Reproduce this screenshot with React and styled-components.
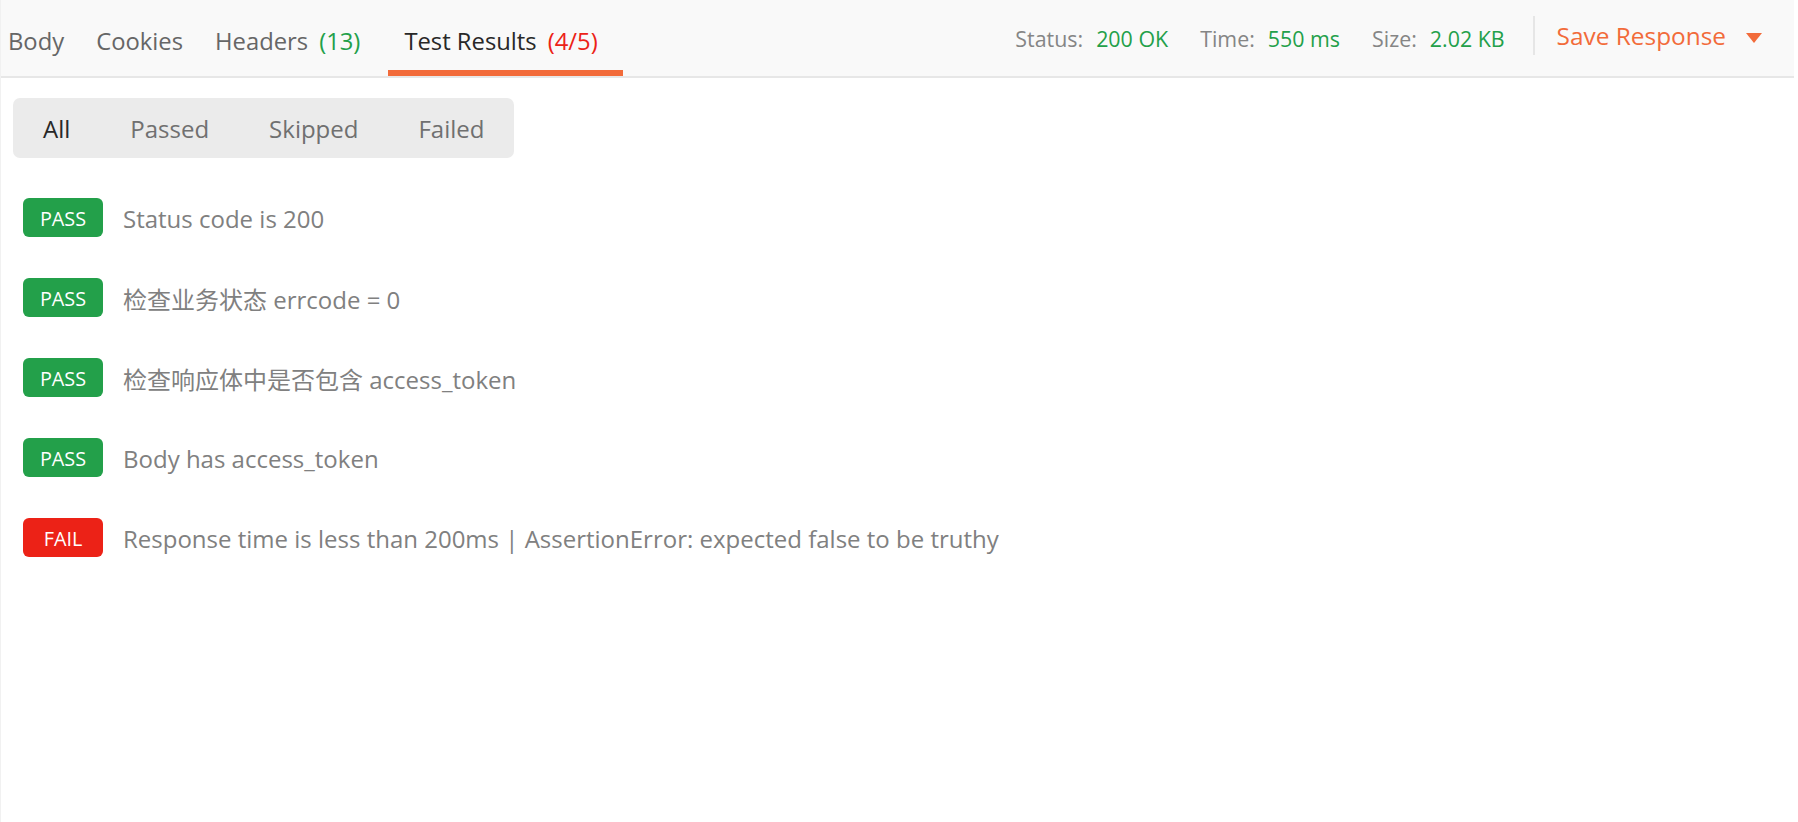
import React from 'react';
import styled, { createGlobalStyle } from 'styled-components';

const GlobalStyle = createGlobalStyle`
  html, body {
    margin: 0;
    padding: 0;
    background: #ffffff;
  }
  body {
    font-family: "Open Sans", "Noto Sans CJK SC", sans-serif;
  }
`;

const colors = {
  green: '#23a04a',
  red: '#ec2217',
  orange: '#f26b3a',
  text: '#282828',
  muted: '#666666',
  light: '#808080',
};

const Page = styled.div`
  min-height: 100vh;
  margin-right: 4px;
  border-left: 1px solid #f1f1f1;
  box-sizing: border-box;
`;

const Header = styled.header`
  display: flex;
  height: 76px;
  background: #f9f9f9;
  border-bottom: 2px solid #e7e7e7;
`;

const Tabs = styled.nav`
  display: flex;
  padding-left: 7px;
`;

const Tab = styled.div`
  display: flex;
  align-items: flex-start;
  box-sizing: border-box;
  height: 76px;
  padding: 25px 16px 0;
  font-size: 23.8px;
  color: ${({ $active }) => ($active ? colors.text : colors.muted)};
  border-bottom: 6px solid ${({ $active }) => ($active ? colors.orange : 'transparent')};

  &:first-child {
    padding-left: 0;
  }
`;

const Count = styled.span`
  margin: 0 ${({ $trail }) => $trail || 9}px 0 11px;
  color: ${({ $tone }) => ($tone === 'red' ? colors.red : colors.green)};
`;

const Meta = styled.div`
  margin-left: auto;
  display: flex;
  align-items: center;
  height: 76px;
`;

const Stat = styled.div`
  font-size: 21.4px;
  color: #858585;
  margin-right: 32px;

  span {
    margin-left: 13px;
    color: ${colors.green};
  }
`;

const Divider = styled.div`
  width: 2px;
  height: 39px;
  margin: 0 0 5px -4px;
  background: #e6e6e6;
`;

const SaveButton = styled.div`
  display: flex;
  align-items: center;
  padding: 0 32px 0 22px;
  margin-bottom: 6px;
  font-size: 24.4px;
  color: ${colors.orange};

  svg {
    margin: 6px 0 0 20px;
  }
`;

const Content = styled.main`
  padding: 20px 12px;
`;

const Filters = styled.div`
  display: inline-flex;
  height: 60px;
  background: #ebebeb;
  border-radius: 7px;
`;

const FilterButton = styled.div`
  display: flex;
  align-items: center;
  padding: 0 30px;
  font-size: 24px;
  color: ${({ $active }) => ($active ? colors.text : '#707070')};
`;

const Results = styled.ul`
  list-style: none;
  margin: 40px 0 0;
  padding: 0 0 0 10px;
  display: flex;
  flex-direction: column;
  gap: 41px;
`;

const Row = styled.li`
  display: flex;
  align-items: center;
  gap: 20px;
  height: 39px;
`;

const Badge = styled.span`
  display: flex;
  align-items: center;
  justify-content: center;
  width: 80px;
  height: 39px;
  border-radius: 6px;
  font-size: 19.8px;
  padding-top: 2px;
  box-sizing: border-box;
  color: #ffffff;
  background: ${({ $pass }) => ($pass ? colors.green : colors.red)};
`;

const Name = styled.span`
  font-size: 24px;
  padding-top: 2px;
  color: ${colors.light};
`;

const tests = [
  { pass: true, name: 'Status code is 200' },
  { pass: true, name: '检查业务状态 errcode = 0' },
  { pass: true, name: '检查响应体中是否包含 access_token' },
  { pass: true, name: 'Body has access_token' },
  { pass: false, name: 'Response time is less than 200ms | AssertionError: expected false to be truthy' },
];

const App = () => (
  <Page>
    <GlobalStyle />
    <Header>
      <Tabs>
        <Tab>Body</Tab>
        <Tab>Cookies</Tab>
        <Tab>Headers<Count $trail={12}>(13)</Count></Tab>
        <Tab $active>Test Results<Count $tone="red">(4/5)</Count></Tab>
      </Tabs>
      <Meta>
        <Stat>Status:<span>200 OK</span></Stat>
        <Stat>Time:<span>550 ms</span></Stat>
        <Stat>Size:<span>2.02 KB</span></Stat>
        <Divider />
        <SaveButton>
          Save Response
          <svg width="16" height="10" viewBox="0 0 16 10">
            <polygon points="0,0 16,0 8,10" fill={colors.orange} />
          </svg>
        </SaveButton>
      </Meta>
    </Header>
    <Content>
      <Filters>
        <FilterButton $active>All</FilterButton>
        <FilterButton>Passed</FilterButton>
        <FilterButton>Skipped</FilterButton>
        <FilterButton>Failed</FilterButton>
      </Filters>
      <Results>
        {tests.map((t) => (
          <Row key={t.name}>
            <Badge $pass={t.pass}>{t.pass ? 'PASS' : 'FAIL'}</Badge>
            <Name>{t.name}</Name>
          </Row>
        ))}
      </Results>
    </Content>
  </Page>
);

export default App;
